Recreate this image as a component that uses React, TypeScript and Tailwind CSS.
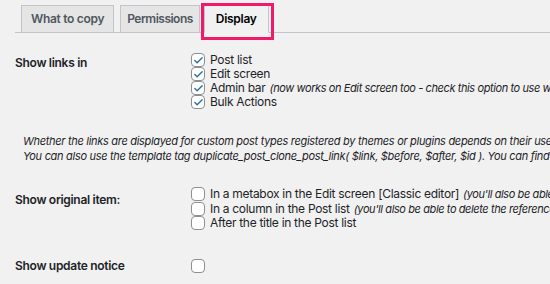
import { Check } from 'lucide-react';

const font = { fontFamily: 'Inter, "Liberation Sans", sans-serif' };

function Box({ checked }: { checked?: boolean }) {
  return (
    <span className="w-[14px] h-[14px] shrink-0 rounded-[4px] border border-[#8c8f94] bg-white flex items-center justify-center">
      {checked && <Check className="w-[11px] h-[11px] text-[#2271b1]" strokeWidth={3} />}
    </span>
  );
}

function Option({ checked, label, note }: { checked?: boolean; label: string; note?: string }) {
  return (
    <div className="flex items-center gap-[5px] whitespace-nowrap">
      <Box checked={checked} />
      <span>
        {label}
        {note && <em className="text-[11px] tracking-[-0.4px] ml-[4px]">{note}</em>}
      </span>
    </div>
  );
}

export default function App() {
  return (
    <div
      className="w-[550px] h-[284px] overflow-hidden bg-[#f1f1f1] text-[12px] tracking-[-0.3px] text-[#1d2327]"
      style={font}
    >
      {/* Tabs */}
      <div className="relative flex items-end gap-[6px] pl-[21px] pt-[5px]">
        <div className="absolute left-[15px] right-0 bottom-0 border-b border-[#c3c4c7]" />
        <div className="relative h-[28px] px-[9px] flex items-center border border-[#c3c4c7] bg-[#e5e5e5] font-semibold text-[#50575e]">
          What to copy
        </div>
        <div className="relative h-[28px] px-[6px] flex items-center border border-[#c3c4c7] bg-[#e5e5e5] font-semibold text-[#50575e] tracking-[-0.5px]">
          Permissions
        </div>
        <div className="relative h-[28px] -ml-[2px] px-[11px] flex items-center border border-[#c3c4c7] border-b-[#f1f1f1] bg-[#f1f1f1] font-semibold text-black">
          Display
          <div className="absolute -left-[4px] -top-[3px] -right-[6px] -bottom-[8px] border-[3px] border-[#f0196b]" />
        </div>
      </div>

      {/* Show links in */}
      <div className="flex mt-[20px] pl-[15px] leading-[14px]">
        <div className="w-[176px] shrink-0 pt-[3px] font-semibold">Show links in</div>
        <div className="flex flex-col">
          <Option checked label="Post list" />
          <Option checked label="Edit screen" />
          <Option
            checked
            label="Admin bar"
            note="(now works on Edit screen too - check this option to use with Gutenberg enabled)"
          />
          <Option checked label="Bulk Actions" />
        </div>
      </div>

      <div className="mt-[25px] pl-[23px] italic text-[11px] tracking-[-0.3px] leading-[15px] whitespace-nowrap">
        <p>
          Whether the <em>links</em> are displayed for custom post types registered by themes or plugins depends on
          their use of standard WordPress UI elements.
        </p>
        <p>
          You can also use the template tag duplicate_post_clone_post_link( $link, $before, $after, $id ). You can find
          more info about this on the developer's guide.
        </p>
      </div>

      {/* Show original item */}
      <div className="flex mt-[23px] pl-[15px] leading-[13.5px]">
        <div className="w-[176px] shrink-0 pt-[6px] font-semibold">Show original item:</div>
        <div className="flex flex-col">
          <Option
            label="In a metabox in the Edit screen [Classic editor]"
            note="(you'll also be able to delete the reference to the original item with a checkbox)"
          />
          <Option
            label="In a column in the Post list"
            note="(you'll also be able to delete the reference to the original item with a checkbox in Quick Edit)"
          />
          <Option label="After the title in the Post list" />
        </div>
      </div>

      {/* Show update notice */}
      <div className="flex items-center mt-[27px] pl-[15px]">
        <div className="w-[176px] shrink-0 font-semibold">Show update notice</div>
        <Box />
      </div>
    </div>
  );
}
